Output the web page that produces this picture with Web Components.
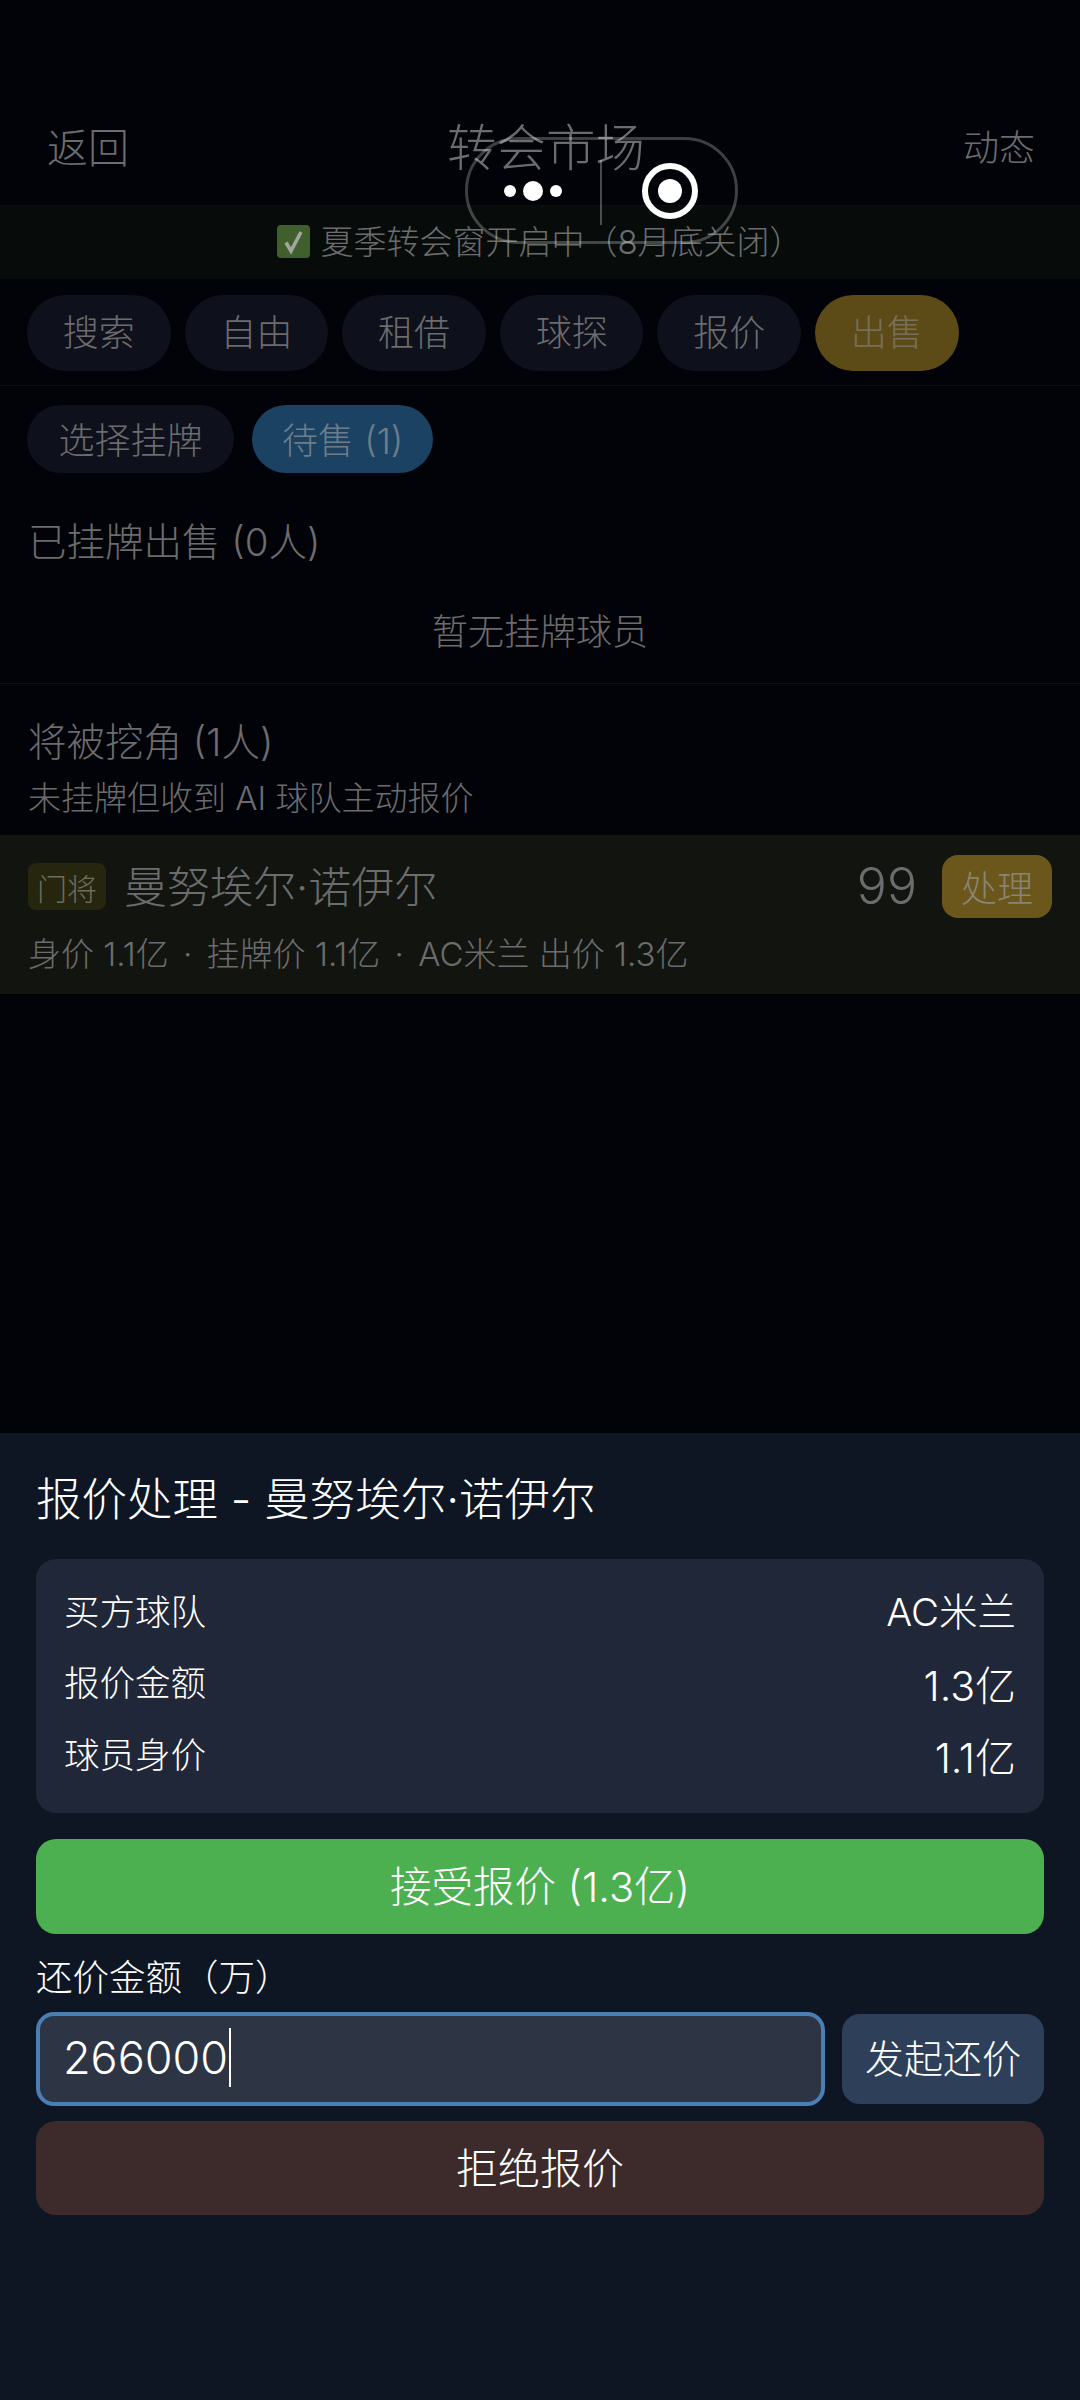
<!DOCTYPE html>
<html lang="zh">
<head>
<meta charset="utf-8">
<title>转会市场</title>
<style>
    html, body { margin: 0; padding: 0; background: #020308; }
    body { font-family: Inter, "Noto Sans CJK SC", sans-serif; font-weight: 300; }
    transfer-app { height: 2400px; }
</style>
</head>
<body>
<transfer-app>
    <market-header></market-header>
    <window-banner>夏季转会窗开启中（8月底关闭）</window-banner>
    <tab-bar>
        <tab-pill>搜索</tab-pill>
        <tab-pill>自由</tab-pill>
        <tab-pill>租借</tab-pill>
        <tab-pill>球探</tab-pill>
        <tab-pill>报价</tab-pill>
        <tab-pill variant="gold">出售</tab-pill>
    </tab-bar>
    <sub-tabs>
        <tab-pill size="small">选择挂牌</tab-pill>
        <tab-pill size="small" variant="blue">待售 (1)</tab-pill>
    </sub-tabs>
    <listed-section></listed-section>
    <poach-section></poach-section>
    <offer-sheet slot="sheet"></offer-sheet>
    <wx-capsule slot="overlay"></wx-capsule>
</transfer-app>

<script>
    function define(name, html) {
        customElements.define(name, class extends HTMLElement {
            constructor() {
                super();
                this.attachShadow({ mode: 'open' });
                this.shadowRoot.innerHTML = html;
            }
        });
    }

    define('transfer-app', `
        <style>
            :host { display: flex; flex-direction: column; position: relative; overflow: hidden; background: #020308; }
            .top { padding-top: 90px; flex: 1; }
            ::slotted(wx-capsule) { position: absolute; left: 465px; top: 137px; }
        </style>
        <div class="top"><slot></slot></div>
        <slot name="sheet"></slot>
        <slot name="overlay"></slot>
    `);

    define('market-header', `
        <style>
            :host { display: flex; align-items: center; justify-content: space-between; height: 115px; padding: 0 45px 0 47px; border-bottom: 1px solid #0a0e16; color: #6c6c6e; }
            span { margin-top: -6px; }
            .back { font-size: 41px; }
            .title { font-size: 49.5px; }
            .news { font-size: 36px; }
        </style>
        <span class="back">返回</span>
        <span class="title">转会市场</span>
        <span class="news">动态</span>
    `);

    define('window-banner', `
        <style>
            :host { display: flex; align-items: center; justify-content: center; gap: 10px; height: 73px; background: #070c0b; color: #6c6c6e; font-size: 33px; }
            svg { width: 33px; height: 33px; flex: none; margin-top: -3px; }
            span { margin-top: -6px; }
        </style>
        <svg viewBox="0 0 33 33"><rect width="33" height="33" rx="4" fill="#3f5f2c"/><path d="M9 17.5l5 8.5L24 7" fill="none" stroke="#a2a5a0" stroke-width="3.6"/></svg>
        <span><slot></slot></span>
    `);

    define('tab-bar', `
        <style>
            :host { display: flex; gap: 14px; padding: 16px 27px 14px; border-bottom: 1px solid #0b0f18; }
        </style>
        <slot></slot>
    `);

    define('sub-tabs', `
        <style>
            :host { display: flex; gap: 18px; padding: 19px 27px 0; }
        </style>
        <slot></slot>
    `);

    define('tab-pill', `
        <style>
            :host { display: flex; align-items: center; box-sizing: border-box; height: 76px; padding: 0 35.8px 6px; border-radius: 38px; background: #0e111b; color: #6c6c6e; font-size: 36px; white-space: nowrap; }
            :host([size="small"]) { height: 68px; border-radius: 34px; padding: 0 31.5px 3px; }
            :host([variant="gold"]) { background: #5c4a17; color: #777059; }
            :host([variant="blue"]) { background: #1b4262; color: #6f7d88; padding: 0 30px 3px; }
        </style>
        <slot></slot>
    `);

    define('listed-section', `
        <style>
            :host { display: block; padding: 44px 28px 26px; border-bottom: 1px solid #0b111b; color: #6c6c6e; }
            .head { height: 50px; line-height: 50px; font-size: 38.5px; }
            .empty { height: 50px; line-height: 50px; margin-top: 40px; text-align: center; font-size: 36px; }
        </style>
        <div class="head">已挂牌出售 (0人)</div>
        <div class="empty">暂无挂牌球员</div>
    `);

    define('poach-section', `
        <style>
            :host { display: block; padding-top: 33px; color: #6c6c6e; }
            .head { height: 50px; line-height: 50px; padding: 0 28px; font-size: 38.5px; }
            .sub { height: 44px; line-height: 44px; margin-top: 9px; padding: 0 28px; font-size: 33px; }
            .row { margin-top: 15px; height: 159px; box-sizing: border-box; padding: 20px 28px 19px; background: #12150f; }
            .line { display: flex; align-items: center; height: 63px; }
            .tag { width: 78px; height: 47px; display: flex; align-items: center; justify-content: center; border-radius: 8px; background: #26260f; font-size: 30px; color: #6f6e5c; }
            .name { margin: -6px 0 0 18px; font-size: 43px; flex: 1; }
            .rating { font-size: 50px; margin-top: -2px; }
            .act { margin-left: 25px; width: 110px; height: 63px; box-sizing: border-box; padding-bottom: 2px; display: flex; align-items: center; justify-content: center; border-radius: 16px; background: #6b561c; color: #8a8571; font-size: 36px; }
            .meta { height: 44px; line-height: 47px; margin-top: 13px; font-size: 33px; white-space: nowrap; }
            .dot { margin: 0 5px; }
        </style>
        <div class="head">将被挖角 (1人)</div>
        <div class="sub">未挂牌但收到 AI 球队主动报价</div>
        <div class="row">
            <div class="line">
                <span class="tag">门将</span>
                <span class="name">曼努埃尔·诺伊尔</span>
                <span class="rating">99</span>
                <span class="act">处理</span>
            </div>
            <div class="meta">身价 1.1亿 <span class="dot">·</span> 挂牌价 1.1亿 <span class="dot">·</span> AC米兰 出价 1.3亿</div>
        </div>
    `);

    define('info-row', `
        <style>
            :host { display: flex; align-items: center; justify-content: space-between; height: 72px; }
            .label { font-size: 35.5px; margin-top: -8px; }
            .value { font-size: 41px; margin-top: -3px; }
            :host([text]) .value { font-size: 38.5px; margin-top: -6px; }
            :host([text]) .label { margin-top: -6px; }
        </style>
        <span class="label"><slot name="label"></slot></span>
        <span class="value"><slot name="value"></slot></span>
    `);

    define('offer-sheet', `
        <style>
            :host { display: block; height: 967px; box-sizing: border-box; padding: 37px 36px 0; background: #0f1623; color: #fff; }
            .title { height: 60px; line-height: 60px; font-size: 45.5px; white-space: nowrap; }
            .card { margin-top: 29px; height: 254px; box-sizing: border-box; padding: 17px 28px 21px; border-radius: 20px; background: #202739; }
            .accept, .reject { display: flex; align-items: center; justify-content: center; box-sizing: border-box; padding-bottom: 6px; border-radius: 20px; }
            .accept { margin-top: 26px; height: 95px; background: #4caf50; font-size: 41.5px; }
            .label { margin-top: 19px; height: 50px; line-height: 50px; font-size: 36.5px; }
            .counter { display: flex; align-items: center; gap: 17px; margin-top: 9px; }
            .input { flex: 1; height: 94px; box-sizing: border-box; display: flex; align-items: center; padding: 0 0 3px 23px; border: 4px solid #4a7fb5; border-radius: 18px; background: #2d3444; font-size: 45px; }
            .caret { width: 2px; height: 59px; margin-left: 1px; background: #fff; }
            .send { width: 202px; height: 90px; box-sizing: border-box; padding-bottom: 7px; display: flex; align-items: center; justify-content: center; border-radius: 18px; background: #2e4059; font-size: 39px; }
            .reject { margin-top: 15px; height: 94px; background: #3d2a2b; font-size: 42px; }
        </style>
        <div class="title">报价处理 - 曼努埃尔·诺伊尔</div>
        <div class="card">
            <info-row text><span slot="label">买方球队</span><span slot="value">AC米兰</span></info-row>
            <info-row><span slot="label">报价金额</span><span slot="value">1.3亿</span></info-row>
            <info-row><span slot="label">球员身价</span><span slot="value">1.1亿</span></info-row>
        </div>
        <div class="accept">接受报价 (1.3亿)</div>
        <div class="label">还价金额（万）</div>
        <div class="counter">
            <div class="input"><span>266000</span><span class="caret"></span></div>
            <div class="send">发起还价</div>
        </div>
        <div class="reject">拒绝报价</div>
    `);

    define('wx-capsule', `
        <style>
            :host { display: block; width: 273px; height: 107px; }
            svg { display: block; }
        </style>
        <svg width="273" height="107" viewBox="0 0 273 107">
            <rect x="1.5" y="1.5" width="270" height="104" rx="52" fill="none" stroke="#fff" stroke-opacity=".24" stroke-width="3"/>
            <path d="M136 23v65" stroke="#fff" stroke-opacity=".28" stroke-width="2"/>
            <circle cx="45" cy="54" r="6" fill="#fff"/>
            <circle cx="68" cy="54" r="10" fill="#fff"/>
            <circle cx="91" cy="54" r="6" fill="#fff"/>
            <circle cx="205" cy="54" r="25" fill="none" stroke="#fff" stroke-width="6"/>
            <circle cx="205" cy="54" r="12" fill="#fff"/>
        </svg>
    `);
</script>
</body>
</html>
